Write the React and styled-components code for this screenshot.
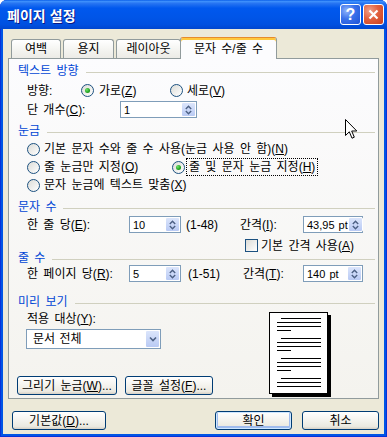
import React from "react"
import styled, { createGlobalStyle, css } from "styled-components"

const GlobalStyle = createGlobalStyle`
  html, body {
    margin: 0;
    padding: 0;
    background: #fff;
  }
  body {
    font-family: "Liberation Sans", "Noto Sans CJK KR", sans-serif;
    font-size: 12px;
    line-height: 14px;
    word-spacing: 2px;
    color: #000;
  }
`;

const Window = styled.div`
  position: relative;
  width: 387px;
  height: 437px;
  display: flex;
  flex-direction: column;
  background: #0055e5;
  border-radius: 7px 7px 0 0;
  overflow: hidden;
  box-shadow: inset 1px 0 #0831d9, inset -1px 0 #0831d9, inset 0 -1px #0831d9;
`;

const TitleBar = styled.div`
  height: 29px;
  flex: none;
  display: flex;
  align-items: center;
  padding: 0 3px 0 7px;
  background: linear-gradient(180deg, #0a5fe9 0%, #3d8ffb 5%, #2674f2 12%, #0058ee 28%, #0055e8 60%, #0050e0 85%, #0046cf 100%);
`;

const Title = styled.div`
  flex: 1;
  color: #fff;
  font-family: "Noto Sans CJK KR", sans-serif;
  font-weight: bold;
  font-size: 14px;
  word-spacing: 1px;
  text-shadow: 1px 1px #0a1883;
`;

const CaptionButton = styled.div`
  width: 21px;
  height: 21px;
  box-sizing: border-box;
  border: 1px solid #fff;
  border-radius: 3px;
  margin-left: 2px;
  display: flex;
  align-items: center;
  justify-content: center;
  color: #fff;
  font-family: "Liberation Sans", sans-serif;
  font-weight: bold;
  font-size: 16px;
  background: ${({ $close }) =>
    $close
      ? "radial-gradient(circle at 30% 30%, #f0a089 0%, #e2613f 45%, #c8401f 100%)"
      : "radial-gradient(circle at 30% 30%, #8fb4fb 0%, #3a71ea 45%, #1d52d6 100%)"};
`;

const Client = styled.div`
  flex: 1;
  margin: 0 3px 3px;
  padding: 8px 5px 0;
  background: #ece9d8;
  display: flex;
  flex-direction: column;
`;

const TabStrip = styled.div`
  display: flex;
  align-items: flex-end;
  height: 21px;
  padding-left: 3px;
`;

const Tab = styled.div`
  position: relative;
  width: ${({ $w }) => $w}px;
  height: 19px;
  box-sizing: border-box;
  margin-right: 2px;
  border: 1px solid #919b9c;
  border-bottom: none;
  border-radius: 3px 3px 0 0;
  background: linear-gradient(#ffffff, #f3f3ef 60%, #ecebe6);
  display: flex;
  align-items: center;
  justify-content: center;
  padding-bottom: 1px;
  white-space: nowrap;
  z-index: 0;
  ${({ $active }) =>
    $active &&
    css`
      height: 22px;
      margin-left: -3px;
      margin-bottom: -1px;
      z-index: 2;
      border-top: 1px solid #e68b2c;
      background: #fcfcfe;
      box-shadow: inset 0 2px #ffc83c;
      padding-top: 2px;
    `}
`;

const Panel = styled.div`
  position: relative;
  z-index: 1;
  width: 371px;
  height: 341px;
  box-sizing: border-box;
  border: 1px solid #919b9c;
  background: linear-gradient(#fcfcfe, #f4f3ee);
  padding: 0 3px 0 9px;
  display: flex;
  flex-direction: column;
`;

const GroupHeader = styled.div`
  display: flex;
  align-items: center;
  height: 12px;
  margin-top: ${({ $mt }) => $mt}px;
  color: #0046d5;
  white-space: nowrap;
  &::after {
    content: "";
    flex: 1;
    height: 1px;
    margin: 2px 0 0 7px;
    background: #d0d0bf;
  }
`;

const Row = styled.div`
  display: flex;
  align-items: center;
  height: ${({ $h }) => $h || 17}px;
  margin-top: ${({ $mt }) => $mt || 0}px;
  padding-left: ${({ $pl }) => ($pl === undefined ? 9 : $pl)}px;
  white-space: nowrap;
`;

const Cell = styled.div`
  flex: none;
  width: ${({ $w }) => ($w ? `${$w}px` : "auto")};
  margin-left: ${({ $ml }) => $ml || 0}px;
`;

const Option = styled.label`
  display: flex;
  align-items: center;
  gap: ${({ $gap }) => $gap || 4}px;
  flex: none;
  width: ${({ $w }) => ($w ? `${$w}px` : "auto")};
`;

const RadioCircle = styled.span`
  position: relative;
  flex: none;
  width: 13px;
  height: 13px;
  box-sizing: border-box;
  border-radius: 50%;
  border: 1px solid #1c5180;
  background: linear-gradient(135deg, #dcdcd7, #ffffff);
  ${({ $checked }) =>
    $checked &&
    css`
      &::after {
        content: "";
        position: absolute;
        left: 3px;
        top: 3px;
        width: 5px;
        height: 5px;
        border-radius: 50%;
        background: radial-gradient(circle at 35% 35%, #6de46a, #21a121 60%, #187a18);
      }
    `}
`;

const CheckBox = styled.span`
  flex: none;
  width: 13px;
  height: 13px;
  box-sizing: border-box;
  border: 1px solid #1c5180;
  background: linear-gradient(135deg, #dcdcd7, #ffffff);
`;

const Focus = styled.span`
  outline: 1px dotted #000;
  outline-offset: 1px;
  padding: 0 1px;
`;

const Field = styled.div`
  flex: none;
  width: ${({ $w }) => $w}px;
  height: ${({ $h }) => $h || 17}px;
  box-sizing: border-box;
  border: 1px solid #7f9db9;
  background: #fff;
  display: flex;
  align-items: center;
  justify-content: space-between;
  padding-left: ${({ $pad }) => $pad || 3}px;
  font-size: ${({ $fs }) => $fs || 12}px;
  word-spacing: 1px;
  white-space: nowrap;
`;

const ArrowButton = styled.div`
  flex: none;
  width: 15px;
  height: 100%;
  box-sizing: border-box;
  border: 1px solid #fff;
  border-radius: 2px;
  background: linear-gradient(#dbe5fb, #b9caf4);
  display: flex;
  align-items: center;
  justify-content: center;
`;

const Button = styled.button`
  flex: none;
  font: inherit;
  word-spacing: inherit;
  color: #000;
  width: ${({ $w }) => $w}px;
  height: 19px;
  margin-left: ${({ $ml }) => $ml || 0}px;
  padding: 0;
  box-sizing: border-box;
  border: 1px solid #003c74;
  border-radius: 3px;
  background: linear-gradient(#ffffff 0%, #f5f4ef 45%, #ebe9e0 85%, #d6d0c5 100%);
  white-space: nowrap;
  ${({ $default }) =>
    $default &&
    css`
      box-shadow: inset 0 0 0 1px #cee7ff, inset 0 -1px 0 2px #a0bcee;
    `}
`;

const PreviewRow = styled.div`
  display: flex;
  flex: 1;
`;

const PreviewLeft = styled.div`
  width: 251px;
  display: flex;
  flex-direction: column;
`;

const ButtonRow = styled.div`
  display: flex;
  gap: ${({ $gap }) => $gap || 8}px;
  margin-top: ${({ $mt }) => $mt || 0}px;
  margin-left: ${({ $ml }) => $ml || 0}px;
`;

const BottomBar = styled.div`
  display: flex;
  align-items: center;
  margin-top: 12px;
  padding-left: 4px;
`;

const Spacer = styled.div`
  flex: 1;
`;

const Cursor = styled.svg`
  position: absolute;
  left: 345px;
  top: 119px;
  z-index: 5;
`;

const SpinArrows = () => (
  <svg width="7" height="10" viewBox="0 0 7 10">
    <path d="M0.8 4 L3.5 1.3 L6.2 4 M0.8 6 L3.5 8.7 L6.2 6" fill="none" stroke="#4d6185" strokeWidth="1.4" />
  </svg>
)

const DownArrow = () => (
  <svg width="8" height="6" viewBox="0 0 8 6">
    <path d="M1 1.5 L4 4.5 L7 1.5" fill="none" stroke="#4d6185" strokeWidth="1.6" />
  </svg>
)

const SpinBox = ({ w, value }) => (
  <Field $w={w} $fs={11}>
    {value}
    <ArrowButton>
      <SpinArrows />
    </ArrowButton>
  </Field>
)

const PreviewPage = () => {
  const lines = [
    [12, 6], [8, 10], [8, 14], [8, 18, 22],
    [12, 26], [8, 30], [8, 34], [8, 38, 22],
    [12, 46], [8, 50], [8, 54], [8, 58, 22],
    [12, 66], [8, 70], [8, 74],
  ]
  return (
    <svg width="63" height="86" viewBox="0 0 63 86" style={{ marginTop: 4 }}>
      <rect x="3" y="3" width="59" height="82" fill="#000" />
      <rect x="0.5" y="0.5" width="58" height="81" fill="#fff" stroke="#000" />
      {lines.map(([x1, y, x2], i) => (
        <line key={i} x1={x1} x2={x2 || 52} y1={y + 0.5} y2={y + 0.5} stroke="#000" strokeWidth="1" />
      ))}
    </svg>
  )
}

export default function App() {
  return (
    <>
      <GlobalStyle />
      <Window>
        <TitleBar>
          <Title>페이지 설정</Title>
          <CaptionButton>?</CaptionButton>
          <CaptionButton $close>
            <svg width="11" height="11" viewBox="0 0 11 11">
              <path d="M1.5 1.5 L9.5 9.5 M9.5 1.5 L1.5 9.5" stroke="#fff" strokeWidth="2.2" />
            </svg>
          </CaptionButton>
        </TitleBar>
        <Client>
          <TabStrip>
            <Tab $w={50}>여백</Tab>
            <Tab $w={51}>용지</Tab>
            <Tab $w={65}>레이아웃</Tab>
            <Tab $w={97} $active>문자 수/줄 수</Tab>
          </TabStrip>
          <Panel>
            <GroupHeader $mt={6}>텍스트 방향</GroupHeader>
            <Row $h={19} $mt={4}>
              <Cell $w={54}>방향:</Cell>
              <Option $w={89} $gap={5}>
                <RadioCircle $checked />
                <span>가로(<u>Z</u>)</span>
              </Option>
              <Option $gap={4}>
                <RadioCircle />
                <span>세로(<u>V</u>)</span>
              </Option>
            </Row>
            <Row $mt={1}>
              <Cell $w={93}>단 개수(<u>C</u>):</Cell>
              <SpinBox w={77} value="1" />
            </Row>

            <GroupHeader $mt={7}>눈금</GroupHeader>
            <Row $h={18} $mt={3}>
              <Option $gap={4}>
                <RadioCircle />
                <span>기본 문자 수와 줄 수 사용(눈금 사용 안 함)(<u>N</u>)</span>
              </Option>
            </Row>
            <Row $h={18}>
              <Option $w={145} $gap={4}>
                <RadioCircle />
                <span>줄 눈금만 지정(<u>O</u>)</span>
              </Option>
              <Option $gap={3}>
                <RadioCircle $checked />
                <Focus>줄 및 문자 눈금 지정(<u>H</u>)</Focus>
              </Option>
            </Row>
            <Row $h={18}>
              <Option $gap={4}>
                <RadioCircle />
                <span>문자 눈금에 텍스트 맞춤(<u>X</u>)</span>
              </Option>
            </Row>

            <GroupHeader $mt={7}>문자 수</GroupHeader>
            <Row $mt={3}>
              <Cell $w={102}>한 줄 당(<u>E</u>):</Cell>
              <SpinBox w={52} value="10" />
              <Cell $w={54} $ml={5}>(1-48)</Cell>
              <Cell $w={63}>간격(<u>I</u>):</Cell>
              <SpinBox w={60} value="43,95 pt" />
            </Row>
            <Row $h={13} $mt={6} $pl={227}>
              <Option $gap={3}>
                <CheckBox />
                <span>기본 간격 사용(<u>A</u>)</span>
              </Option>
            </Row>

            <GroupHeader $mt={0}>줄 수</GroupHeader>
            <Row $mt={1}>
              <Cell $w={102}>한 페이지 당(<u>R</u>):</Cell>
              <SpinBox w={52} value="5" />
              <Cell $w={55} $ml={7}>(1-51)</Cell>
              <Cell $w={60}>간격(<u>T</u>):</Cell>
              <SpinBox w={60} value="140 pt" />
            </Row>

            <GroupHeader $mt={14}>미리 보기</GroupHeader>
            <PreviewRow>
              <PreviewLeft>
                <Row $h={14} $mt={4}>
                  적용 대상(<u>Y</u>):
                </Row>
                <Row $h={20} $mt={3} $pl={8}>
                  <Field $w={135} $h={20} $pad={6}>
                    문서 전체
                    <ArrowButton>
                      <DownArrow />
                    </ArrowButton>
                  </Field>
                </Row>
                <ButtonRow $mt={27} $ml={-1}>
                  <Button $w={100}>그리기 눈금(<u>W</u>)...</Button>
                  <Button $w={88}>글꼴 설정(<u>F</u>)...</Button>
                </ButtonRow>
              </PreviewLeft>
              <PreviewPage />
            </PreviewRow>
          </Panel>
          <BottomBar>
            <Button $w={94}>기본값(<u>D</u>)...</Button>
            <Spacer />
            <Button $w={77} $default>확인</Button>
            <Button $w={77} $ml={10}>취소</Button>
          </BottomBar>
        </Client>
        <Cursor width="13" height="21" viewBox="0 0 13 21">
          <path d="M0.5 0.5 L0.5 16.5 L4.3 12.8 L7 19.2 L9.3 18.2 L6.7 12 L11.8 12 Z" fill="#fff" stroke="#000" strokeWidth="1" strokeLinejoin="miter" />
        </Cursor>
      </Window>
    </>
  )
}
